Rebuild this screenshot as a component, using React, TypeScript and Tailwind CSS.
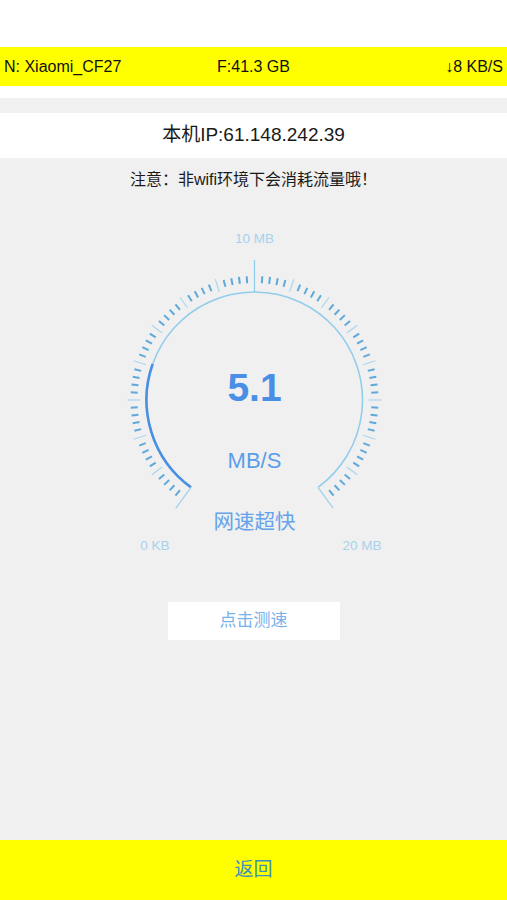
import React from "react";

const CX = 254.5;
const CY = 198;

function polar(r: number, deg: number) {
  const a = (deg * Math.PI) / 180;
  return { x: CX + r * Math.sin(a), y: CY - r * Math.cos(a) };
}

function arcPath(r: number, start: number, end: number) {
  const s = polar(r, start);
  const e = polar(r, end);
  const large = end - start > 180 ? 1 : 0;
  return `M ${s.x} ${s.y} A ${r} ${r} 0 ${large} 1 ${e.x} ${e.y}`;
}

function Gauge() {
  const ticks = [];
  for (let i = 0; i <= 80; i++) {
    const deg = -144 + i * 3.6;
    let r1 = 117;
    let r2 = 124;
    let color = "#5fa9da";
    let w = 2;
    if (i % 5 === 0) {
      r1 = 114;
      r2 = 127;
      color = "#a9d6ee";
      w = 1.2;
      if (i === 40) {
        r1 = 108;
        r2 = 140;
        color = "#8fcbea";
      }
      if (i === 0 || i === 80) {
        r1 = 108;
        r2 = 134;
        color = "#9fd1ec";
      }
    }
    const p1 = polar(r1, deg);
    const p2 = polar(r2, deg);
    ticks.push(
      <line key={i} x1={p1.x} y1={p1.y} x2={p2.x} y2={p2.y} stroke={color} strokeWidth={w} />
    );
  }
  const value = 5.1;
  const endDeg = -144 + (value / 20) * 288;
  return (
    <svg width="507" height="358" viewBox="0 0 507 358" className="block">
      <path d={arcPath(108, -144, 144)} fill="none" stroke="#93cdec" strokeWidth={1.6} />
      <path d={arcPath(108, -144, endDeg)} fill="none" stroke="#4a90e2" strokeWidth={2.6} />
      {ticks}
      <text x={CX} y={41} textAnchor="middle" fontSize="13.5" fill="#a6d2ee" fontFamily="'Liberation Sans', sans-serif">10 MB</text>
      <text x={CX} y={199} textAnchor="middle" fontSize="39" fontWeight="600" fill="#4a8fe6" fontFamily="'Liberation Sans', sans-serif">5.1</text>
      <text x={CX} y={266} textAnchor="middle" fontSize="22" fill="#5a9ee8" fontFamily="'Liberation Sans', sans-serif">MB/S</text>
      <text x={CX} y={327} textAnchor="middle" fontSize="20.5" fill="#65a3ea" fontFamily="'Noto Sans CJK SC', sans-serif">网速超快</text>
      <text x={155} y={348} textAnchor="middle" fontSize="13.5" fill="#a6d2ee" fontFamily="'Liberation Sans', sans-serif">0 KB</text>
      <text x={362} y={348} textAnchor="middle" fontSize="13.5" fill="#a6d2ee" fontFamily="'Liberation Sans', sans-serif">20 MB</text>
    </svg>
  );
}

export default function App() {
  return (
    <div
      className="flex h-[900px] w-[507px] flex-col bg-[#f0f0f0]"
      style={{ fontFamily: "'Liberation Sans', 'Noto Sans CJK SC', sans-serif" }}
    >
      <div className="h-[47px] bg-white" />
      <div className="grid h-[39px] grid-cols-3 items-center bg-[#ffff00] px-1 text-[16px] text-[#111]">
        <div className="whitespace-nowrap text-left">N: Xiaomi_CF27</div>
        <div className="whitespace-nowrap text-center">F:41.3 GB</div>
        <div className="whitespace-nowrap text-right">↓8 KB/S</div>
      </div>
      <div className="h-[12px] bg-white" />
      <div className="h-[15px] bg-[#f0f0f0]" />
      <div className="flex h-[45px] items-center justify-center bg-white text-[19px] text-[#1a1a1a]">
        本机IP:61.148.242.39
      </div>
      <div className="flex h-[44px] items-center justify-center text-[16px] text-[#1a1a1a]">
        注意：非wifi环境下会消耗流量哦！
      </div>
      <Gauge />
      <div className="mx-auto mt-[42px] flex h-[38px] w-[172px] items-center justify-center bg-white text-[17px] text-[#78b2ea]">
        点击测速
      </div>
      <div className="flex-1" />
      <div className="flex h-[60px] items-center justify-center bg-[#ffff00] text-[19px] text-[#3d8fbd]">
        返回
      </div>
    </div>
  );
}
